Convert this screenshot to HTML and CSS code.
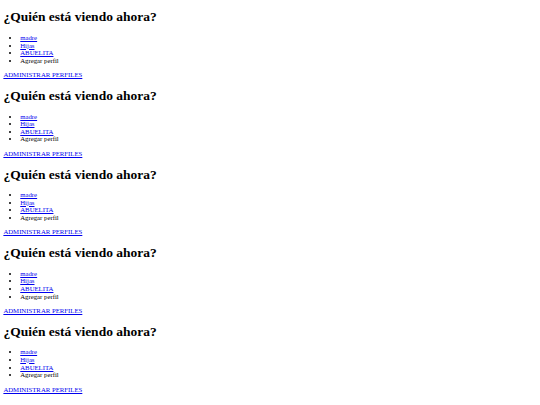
FILE: index.html
```html
<!DOCTYPE html>
<html lang="es">
<head>
<meta charset="utf-8">
<title>Perfiles</title>
<link rel="stylesheet" href="styles.css">
</head>
<body class="page">
<section class="profiles">
<h1 class="title">¿Quién está viendo ahora?</h1>
<ul class="list">
<li><a href="#">madre</a></li>
<li><a href="#">Hijas</a></li>
<li><a href="#">ABUELITA</a></li>
<li>Agregar perfil</li>
</ul>
<p class="manage"><a href="#">ADMINISTRAR PERFILES</a></p>
</section>
<section class="profiles">
<h1 class="title">¿Quién está viendo ahora?</h1>
<ul class="list">
<li><a href="#">madre</a></li>
<li><a href="#">Hijas</a></li>
<li><a href="#">ABUELITA</a></li>
<li>Agregar perfil</li>
</ul>
<p class="manage"><a href="#">ADMINISTRAR PERFILES</a></p>
</section>
<section class="profiles">
<h1 class="title">¿Quién está viendo ahora?</h1>
<ul class="list">
<li><a href="#">madre</a></li>
<li><a href="#">Hijas</a></li>
<li><a href="#">ABUELITA</a></li>
<li>Agregar perfil</li>
</ul>
<p class="manage"><a href="#">ADMINISTRAR PERFILES</a></p>
</section>
<section class="profiles">
<h1 class="title">¿Quién está viendo ahora?</h1>
<ul class="list">
<li><a href="#">madre</a></li>
<li><a href="#">Hijas</a></li>
<li><a href="#">ABUELITA</a></li>
<li>Agregar perfil</li>
</ul>
<p class="manage"><a href="#">ADMINISTRAR PERFILES</a></p>
</section>
<section class="profiles">
<h1 class="title">¿Quién está viendo ahora?</h1>
<ul class="list">
<li><a href="#">madre</a></li>
<li><a href="#">Hijas</a></li>
<li><a href="#">ABUELITA</a></li>
<li>Agregar perfil</li>
</ul>
<p class="manage"><a href="#">ADMINISTRAR PERFILES</a></p>
</section>
<section class="profiles">
<h1 class="title">¿Quién está viendo ahora?</h1>
<ul class="list">
<li><a href="#">madre</a></li>
<li><a href="#">Hijas</a></li>
<li><a href="#">ABUELITA</a></li>
<li>Agregar perfil</li>
</ul>
<p class="manage"><a href="#">ADMINISTRAR PERFILES</a></p>
</section>
</body>
</html>
```
FILE: styles.css
```css
html {
  background: #fff;
}
.page {
  margin: 3.375px;
  font-family: "Liberation Serif", "Times New Roman", serif;
  font-size: 6.75px;
  line-height: 7.62px;
  color: #000;
  background: #fff;
}
.title {
  font-size: 13.5px;
  line-height: 15.6px;
  font-weight: bold;
  margin: 9.05px 0;
}
.profiles:first-child .title {
  margin-top: 6px;
}
.list {
  margin: 6.75px 0;
  padding-left: 16.875px;
  list-style: disc;
}
.manage {
  margin: 6.75px 0 6.6px;
}
a {
  color: #0000ee;
  text-decoration: underline;
}
```
